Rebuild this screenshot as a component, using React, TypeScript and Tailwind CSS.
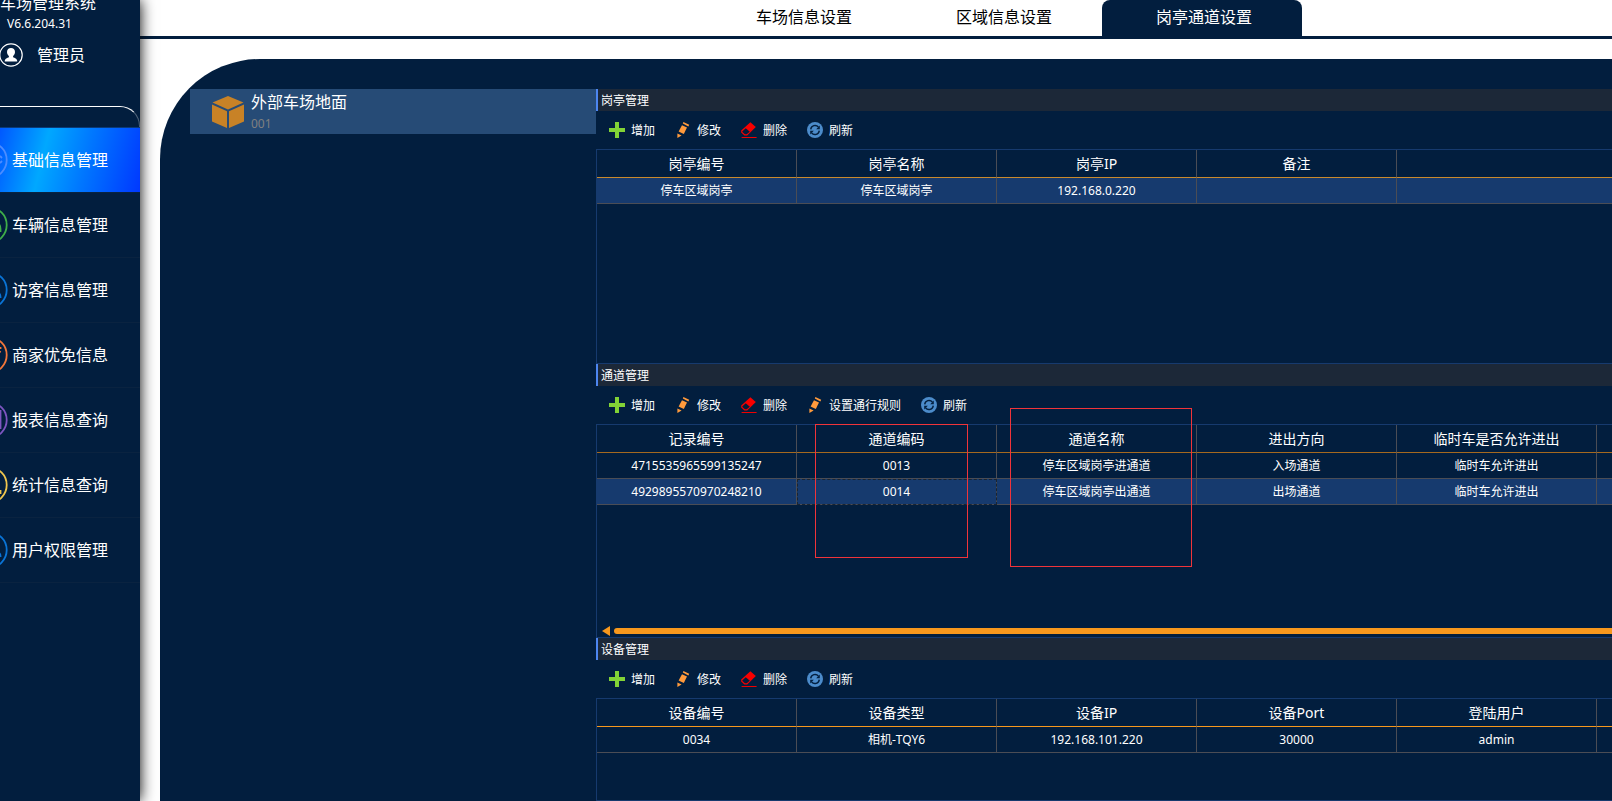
import React from "react";

type IconName = "add" | "edit" | "remove" | "refresh";

function ToolIcon({ name }: { name: IconName }) {
  if (name === "add") {
    return (
      <svg className="size-4 shrink-0" viewBox="0 0 16 16" aria-hidden="true">
        <path d="M6 0h4v6h6v4h-6v6H6v-6H0V6h6z" fill="#82d336" />
      </svg>
    );
  }
  if (name === "edit") {
    return (
      <svg className="size-4 shrink-0" viewBox="0 0 16 16" aria-hidden="true">
        <path d="M8.4 0L14.2 2.800L13.4 4.400L7.800 1.600z" fill="#ff9a3c" />
        <path d="M7 3.200L12 5.600L8.800 12L3.600 9.600z" fill="#ff9a3c" />
        <path d="M2.400 11.600L6.600 13.600L2.400 16z" fill="#ff9a3c" />
      </svg>
    );
  }
  if (name === "remove") {
    return (
      <svg className="size-4 shrink-0" viewBox="0 0 16 16" aria-hidden="true">
        <path d="M9.400 0.200L14.800 5L6.200 13.400H3.400L0.200 10.400V8.600z" fill="#f80000" />
        <path d="M4.800 6.200L8.800 9.800L5.700 12.300H3.900L1.400 10V9.200z" fill="#031c3a" />
        <path d="M0.600 15h15v1h-15z" fill="#f00000" />
      </svg>
    );
  }
  return (
    <svg className="size-4 shrink-0" viewBox="0 0 16 16" aria-hidden="true">
      <circle cx="8" cy="8" r="8" fill="#4c8ccb" />
      <path
        d="M3.700 7.400A4.400 4.400 0 0 1 11.400 5M12.300 8.600A4.400 4.400 0 0 1 4.600 11"
        fill="none"
        stroke="#04203f"
        strokeWidth="1.400"
      />
      <path d="M12.800 3.600v3.600H9.200zM3.200 12.400V8.800h3.600z" fill="#04203f" />
    </svg>
  );
}

type Tool = { icon: IconName; label: string };

const add: Tool = { icon: "add", label: "增加" };
const edit: Tool = { icon: "edit", label: "修改" };
const remove: Tool = { icon: "remove", label: "删除" };
const refresh: Tool = { icon: "refresh", label: "刷新" };
const rules: Tool = { icon: "edit", label: "设置通行规则" };

type SectionProps = {
  title: string;
  tools: Tool[];
  columns: string[];
  rows: string[][];
  selected?: number;
  focused?: number;
  lineClass: string;
  className: string;
  scrollbar?: boolean;
  children?: React.ReactNode;
};

function Section({
  title,
  tools,
  columns,
  rows,
  selected,
  focused,
  lineClass,
  className,
  scrollbar,
  children,
}: SectionProps) {
  return (
    <section className={`relative flex flex-col ${className}`}>
      <h2 className="h-[22px] shrink-0 border-l-2 border-[#4d86f0] bg-[#1c2838] pl-[3px] text-xs leading-6">
        {title}
      </h2>
      <div className="flex h-[38px] shrink-0 items-center gap-5 pl-[13px]">
        {tools.map((t) => (
          <button key={t.label} type="button" className="flex items-center gap-1.5 text-xs leading-4">
            <ToolIcon name={t.icon} />
            <span className="pt-px">{t.label}</span>
          </button>
        ))}
      </div>
      <div className="flex min-h-0 grow flex-col border-y border-l border-[#163a6e]">
        <table className="w-full table-fixed border-separate border-spacing-0 text-center">
          <thead>
            <tr className="h-7">
              {columns.map((c) => (
                <th
                  key={c}
                  className={`w-[200px] border-r border-b border-r-[#4b4d55] p-0 text-sm leading-5 font-normal ${lineClass}`}
                >
                  {c}
                </th>
              ))}
              <td className={`border-b p-0 ${lineClass}`} />
            </tr>
          </thead>
          <tbody>
            {rows.map((r, i) => (
              <tr key={r[0]} className={i === selected ? "h-[26px] bg-[#163a6e]" : "h-[26px]"}>
                {r.map((cell, j) => (
                  <td
                    key={j}
                    className={`border-r border-b border-[#4b4d55] p-0 text-xs ${
                      i === selected && j === focused
                        ? "outline-1 -outline-offset-1 outline-dashed outline-[#1a2430]"
                        : ""
                    }`}
                  >
                    {cell}
                  </td>
                ))}
                <td className="border-b border-[#4b4d55] p-0" />
              </tr>
            ))}
          </tbody>
        </table>
        {scrollbar && (
          <div className="mt-auto flex h-3 items-center gap-1 pl-[5px]">
            <svg className="h-[10px] w-2 shrink-0" viewBox="0 0 8 10" aria-hidden="true">
              <path d="M8 0v10L0 5z" fill="#f7981d" />
            </svg>
            <div className="h-1.5 grow rounded-l-full bg-[#f7981d]" />
          </div>
        )}
      </div>
      {children}
    </section>
  );
}

const menu = [
  { label: "基础信息管理", color: "#4d8dff", glyph: "M0 14l2 2M0 21l2-2" },
  { label: "车辆信息管理", color: "#3fae49", glyph: "M-3 16q3.500 1 3.500 6v3" },
  { label: "访客信息管理", color: "#0a74d6", glyph: "M-2 20q2.500 2 2.500 5h-4" },
  { label: "商家优免信息", color: "#f2763a", glyph: "M-4 11h4.500v1M0.500 14l-2 3" },
  { label: "报表信息查询", color: "#7d55c0", glyph: "M0.500 8v19" },
  { label: "统计信息查询", color: "#efc64e", glyph: "M-3 24h3.500v3" },
  { label: "用户权限管理", color: "#0a74d6", glyph: "M-3 20q3.500 1 3.500 4h-4" },
];

const tabs = ["车场信息设置", "区域信息设置", "岗亭通道设置"];

function Sidebar() {
  return (
    <aside className="relative z-10 w-[140px] shrink-0 bg-[#021e3e] shadow-[0_0_14px_#000]">
      <div className="-mt-[9px] text-base leading-6 whitespace-nowrap">车场管理系统</div>
      <div className="pl-[7px] text-xs leading-[18px]">V6.6.204.31</div>
      <div className="mt-[10px] flex h-6 items-center gap-[13px]">
        <svg className="size-6" viewBox="1 0 24 24" aria-hidden="true">
          <circle cx="12" cy="12" r="11.200" fill="none" stroke="#fff" strokeWidth="1.200" />
          <path
            d="M12 5c2.400 0 4 1.600 4 4 0 1.700-.8 3.200-1.900 4v1.300c1.600.8 4.200 1.300 4.200 4.200H5.700c0-2.900 2.600-3.400 4.200-4.200V13C8.800 12.200 8 10.700 8 9c0-2.400 1.600-4 4-4z"
            fill="#fff"
          />
        </svg>
        <span className="text-base">管理员</span>
      </div>
      <div className="mt-[39px] h-[21px] rounded-tr-[20px] border-t border-r border-t-white border-r-white/30" />
      <nav>
        {menu.map((m, i) => (
          <a
            key={m.label}
            href="#"
            className={`flex h-[65px] items-center gap-1 border-t text-base ${
              i === 0
                ? "border-[#0b3a78] bg-[linear-gradient(104deg,#0058ff_0%,#00a8ff_32%,#0078ff_60%,#0038ff_100%)]"
                : "border-[#0a2340]"
            }`}
          >
            <svg className="h-9 w-2 shrink-0" viewBox="0 0 8 36" aria-hidden="true">
              <circle cx="-11" cy="18" r="17.700" fill="none" stroke={m.color} strokeWidth="1.800" />
              <path d={m.glyph} fill="none" stroke={m.color} strokeWidth="1.800" />
            </svg>
            {m.label}
          </a>
        ))}
        <div className="border-t border-[#0a2340]" />
      </nav>
    </aside>
  );
}

export default function App() {
  return (
    <div className="flex h-screen overflow-hidden bg-white font-['Noto_Sans','Noto_Sans_CJK_SC',sans-serif] text-white">
      <Sidebar />
      <main className="flex min-w-0 grow flex-col">
        <div className="flex h-[39px] shrink-0 border-b-3 border-[#021e3e] pl-[562px]">
          {tabs.map((t, i) => (
            <button
              key={t}
              type="button"
              className={`w-[200px] shrink-0 pb-0.5 pl-1 text-base ${
                i === 2 ? "rounded-t-lg bg-[#021e3e] text-white" : "text-black"
              }`}
            >
              {t}
            </button>
          ))}
        </div>
        <div className="mt-5 ml-5 flex min-h-0 grow rounded-tl-[100px] bg-[#021e3e] pt-[30px] pl-[30px]">
          <div className="w-[406px] shrink-0">
            <button type="button" className="flex h-[45px] w-full items-center gap-[7px] bg-[#264b76] pl-[22px] text-left">
              <svg className="size-8 shrink-0" viewBox="0 0 32 32" aria-hidden="true">
                <path d="M16 0l15.500 6.400L16 13.400L0.500 6.400z" fill="#c88226" />
                <path d="M0 8.400l15 6.800V32L0 25.600z" fill="#c88226" />
                <path d="M32 8.400l-15 6.800V32l15-6.400z" fill="#c88226" />
              </svg>
              <span className="flex flex-col pt-px">
                <span className="text-base leading-6">外部车场地面</span>
                <span className="text-xs leading-5 text-[#808080]">001</span>
              </span>
            </button>
          </div>
          <div className="flex min-w-0 grow flex-col">
            <Section
              title="岗亭管理"
              tools={[add, edit, remove, refresh]}
              columns={["岗亭编号", "岗亭名称", "岗亭IP", "备注"]}
              rows={[["停车区域岗亭", "停车区域岗亭", "192.168.0.220", ""]]}
              selected={0}
              lineClass="border-b-[#c98a2c]"
              className="h-[275px] shrink-0"
            />
            <Section
              title="通道管理"
              tools={[add, edit, remove, rules, refresh]}
              columns={["记录编号", "通道编码", "通道名称", "进出方向", "临时车是否允许进出"]}
              rows={[
                ["4715535965599135247", "0013", "停车区域岗亭进通道", "入场通道", "临时车允许进出"],
                ["4929895570970248210", "0014", "停车区域岗亭出通道", "出场通道", "临时车允许进出"],
              ]}
              selected={1}
              focused={1}
              lineClass="border-b-[#a5691f]"
              className="h-[274px] shrink-0"
              scrollbar
            >
              <div className="pointer-events-none absolute top-[60px] left-[219px] h-[134px] w-[153px] border border-[#f0343a]" />
              <div className="pointer-events-none absolute top-11 left-[414px] h-[159px] w-[182px] border border-[#f0343a]" />
            </Section>
            <Section
              title="设备管理"
              tools={[add, edit, remove, refresh]}
              columns={["设备编号", "设备类型", "设备IP", "设备Port", "登陆用户"]}
              rows={[["0034", "相机-TQY6", "192.168.101.220", "30000", "admin"]]}
              lineClass="border-b-[#f7981d]"
              className="min-h-0 grow"
            />
          </div>
        </div>
      </main>
    </div>
  );
}
